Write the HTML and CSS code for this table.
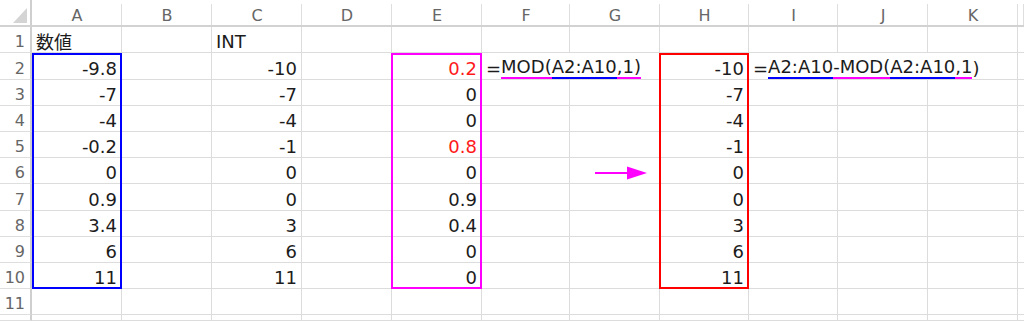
FILE: index.html
```html
<!DOCTYPE html>
<html lang="ja">
<head>
<meta charset="utf-8">
<title>MOD INT</title>
<link rel="stylesheet" href="styles.css">
</head>
<body>
<div class="sheet">
  <div class="grid cells">
    <div class="corner"><svg class="tri" width="32" height="27" viewBox="0 0 32 27"><polygon points="27,8 27,23 13,23" fill="#d4d4d4"/></svg></div>
    <div class="ch">A</div><div class="ch">B</div><div class="ch">C</div><div class="ch">D</div><div class="ch">E</div><div class="ch">F</div><div class="ch">G</div><div class="ch">H</div><div class="ch">I</div><div class="ch">J</div><div class="ch">K</div><div class="ch"></div>

    <div class="rh">1</div><div class="c l cjk">数値</div><div class="c"></div><div class="c l">INT</div><div class="c"></div><div class="c"></div><div class="c"></div><div class="c"></div><div class="c"></div><div class="c"></div><div class="c"></div><div class="c"></div><div class="c"></div>

    <div class="rh">2</div><div class="c">-9.8</div><div class="c"></div><div class="c">-10</div><div class="c"></div><div class="c red">0.2</div><div class="c l span2">=<span class="um">MOD(</span><span class="ub">A2:A10</span><span class="um">,1)</span></div><div class="c">-10</div><div class="c l span3">=<span class="ub">A2:A10</span><span class="um">-MOD(</span><span class="ub">A2:A10</span><span class="um">,1</span>)</div><div class="c"></div>

    <div class="rh">3</div><div class="c">-7</div><div class="c"></div><div class="c">-7</div><div class="c"></div><div class="c">0</div><div class="c"></div><div class="c"></div><div class="c">-7</div><div class="c"></div><div class="c"></div><div class="c"></div><div class="c"></div>

    <div class="rh">4</div><div class="c">-4</div><div class="c"></div><div class="c">-4</div><div class="c"></div><div class="c">0</div><div class="c"></div><div class="c"></div><div class="c">-4</div><div class="c"></div><div class="c"></div><div class="c"></div><div class="c"></div>

    <div class="rh">5</div><div class="c">-0.2</div><div class="c"></div><div class="c">-1</div><div class="c"></div><div class="c red">0.8</div><div class="c"></div><div class="c"></div><div class="c">-1</div><div class="c"></div><div class="c"></div><div class="c"></div><div class="c"></div>

    <div class="rh">6</div><div class="c">0</div><div class="c"></div><div class="c">0</div><div class="c"></div><div class="c">0</div><div class="c"></div><div class="c arrow-cell"><svg width="52" height="14" viewBox="0 0 52 14"><line x1="0" y1="7" x2="34" y2="7" stroke="#ff00ff" stroke-width="2"/><polygon points="32,0.5 52,7 32,13.5" fill="#ff00ff"/></svg></div><div class="c">0</div><div class="c"></div><div class="c"></div><div class="c"></div><div class="c"></div>

    <div class="rh">7</div><div class="c">0.9</div><div class="c"></div><div class="c">0</div><div class="c"></div><div class="c">0.9</div><div class="c"></div><div class="c"></div><div class="c">0</div><div class="c"></div><div class="c"></div><div class="c"></div><div class="c"></div>

    <div class="rh">8</div><div class="c">3.4</div><div class="c"></div><div class="c">3</div><div class="c"></div><div class="c">0.4</div><div class="c"></div><div class="c"></div><div class="c">3</div><div class="c"></div><div class="c"></div><div class="c"></div><div class="c"></div>

    <div class="rh">9</div><div class="c">6</div><div class="c"></div><div class="c">6</div><div class="c"></div><div class="c">0</div><div class="c"></div><div class="c"></div><div class="c">6</div><div class="c"></div><div class="c"></div><div class="c"></div><div class="c"></div>

    <div class="rh">10</div><div class="c">11</div><div class="c"></div><div class="c">11</div><div class="c"></div><div class="c">0</div><div class="c"></div><div class="c"></div><div class="c">11</div><div class="c"></div><div class="c"></div><div class="c"></div><div class="c"></div>

    <div class="rh">11</div><div class="c"></div><div class="c"></div><div class="c"></div><div class="c"></div><div class="c"></div><div class="c"></div><div class="c"></div><div class="c"></div><div class="c"></div><div class="c"></div><div class="c"></div><div class="c"></div>

    <div class="rh"></div><div class="c"></div><div class="c"></div><div class="c"></div><div class="c"></div><div class="c"></div><div class="c"></div><div class="c"></div><div class="c"></div><div class="c"></div><div class="c"></div><div class="c"></div><div class="c"></div>
  </div>
  <div class="grid overlay">
    <div class="box box-blue"></div>
    <div class="box box-magenta"></div>
    <div class="box box-red"></div>
  </div>
</div>
</body>
</html>
```

FILE: styles.css
```css
html, body {
  margin: 0;
  padding: 0;
  background: #ffffff;
  overflow: hidden;
}

.sheet {
  display: grid;
  width: 1024px;
  height: 321px;
  overflow: hidden;
}

.sheet > .grid {
  grid-area: 1 / 1;
}

.grid {
  display: grid;
  grid-template-columns: 32px 90px 90px 90px 90px 90px 88px 90px 89px 89px 90px 90px 6px;
  grid-template-rows: 27px 26px 27px 26px 26px 26px 26px 27px 26px 26px 26px 26px 6px;
}

.cells {
  font-family: "DejaVu Sans", "Noto Sans CJK JP", sans-serif;
}

.corner {
  border-right: 2px solid #cfcfcf;
  border-bottom: 2px solid #d2d2d2;
  box-sizing: border-box;
  overflow: hidden;
}

.tri {
  display: block;
}

.ch {
  box-sizing: border-box;
  border-bottom: 2px solid #d2d2d2;
  background: linear-gradient(#dedede, #dedede) right 4px / 1px calc(100% - 4px) no-repeat;
  display: flex;
  align-items: flex-end;
  justify-content: center;
  font-size: 16px;
  line-height: 19px;
  color: #666666;
}

.rh {
  box-sizing: border-box;
  border-right: 2px solid #cfcfcf;
  border-bottom: 1px solid #dedede;
  display: flex;
  align-items: flex-end;
  justify-content: flex-end;
  padding-right: 5px;
  font-size: 16px;
  line-height: 20px;
  color: #666666;
}

.c {
  box-sizing: border-box;
  border-right: 1px solid #dcdcdc;
  border-bottom: 1px solid #dcdcdc;
  display: flex;
  align-items: flex-end;
  justify-content: flex-end;
  padding: 0 4px;
  font-size: 18px;
  line-height: 21px;
  color: #1c1c1c;
  white-space: nowrap;
}

.c.l {
  justify-content: flex-start;
}

.cjk {
  font-family: "Noto Sans CJK JP", sans-serif;
}

.red {
  color: #ff1a1a;
}

.span2 {
  grid-column: span 2;
}

.span3 {
  grid-column: span 3;
}

.um {
  border-bottom: 2px solid #ff00ff;
}

.ub {
  border-bottom: 2px solid #0000ff;
}

.arrow-cell {
  justify-content: flex-start;
  align-items: center;
  padding: 4px 0 0 25px;
}

.arrow-cell svg {
  display: block;
}

.overlay {
  pointer-events: none;
}

.box {
  box-sizing: border-box;
  border: 2px solid;
}

.box-blue {
  grid-column: 2;
  grid-row: 3 / 12;
  border-color: #0000ff;
}

.box-magenta {
  grid-column: 6;
  grid-row: 3 / 12;
  border-color: #ff00ff;
  margin-left: -1px;
}

.box-red {
  grid-column: 9;
  grid-row: 3 / 12;
  border-color: #ff0000;
  margin-left: -1px;
}
```
